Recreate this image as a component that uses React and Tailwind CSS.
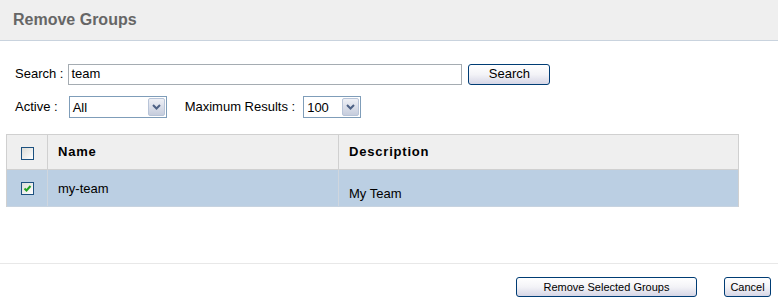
// Remove Groups dialog: search form, results table with checkboxes, footer actions.

function Chevron() {
  return (
    <svg width="9" height="6" viewBox="0 0 9 6">
      <path d="M1 1 L4.5 4.5 L8 1" fill="none" stroke="#4d6185" strokeWidth="2" />
    </svg>
  );
}

function Select({ value, width }) {
  return (
    <div
      className={`flex items-center h-[22px] border border-[#7f9db9] bg-white ${width}`}
    >
      <span className="flex-1 pl-[3px] leading-none">{value}</span>
      <span className="flex items-center justify-center w-[17px] h-[18px] mr-[1px] rounded-[2px] border border-[#b8c4d8] bg-gradient-to-b from-[#eef0f6] to-[#c6cddd]">
        <Chevron />
      </span>
    </div>
  );
}

function Checkbox({ checked }) {
  return (
    <span className="flex items-center justify-center w-[13px] h-[13px] border border-[#1c5180] bg-gradient-to-br from-[#dcdcd7] to-white">
      {checked && (
        <svg width="9" height="9" viewBox="0 0 9 9">
          <path d="M1.5 4.5 L3.5 6.5 L7.5 2" fill="none" stroke="#21a121" strokeWidth="2" />
        </svg>
      )}
    </span>
  );
}

function Button({ children, className }) {
  return (
    <button
      className={`flex items-center justify-center rounded-[3px] border border-[#003c74] bg-gradient-to-b from-white via-[#f3f3f7] to-[#d6d6e6] text-black ${className}`}
    >
      {children}
    </button>
  );
}

function App() {
  return (
    <div className="w-[778px] h-[305px] bg-white text-[13px] text-black font-['Liberation_Sans',Arial,sans-serif]">
      <header className="h-[41px] flex items-center pl-[13px] bg-[#efefef] border-b border-[#c9d3de]">
        <h1 className="text-[16px] font-bold text-[#666666]">Remove Groups</h1>
      </header>

      <div className="pt-[22px]">
        <div className="flex items-center h-[22px] pl-[15px]">
          <span>Search :</span>
          <div className="ml-[5px] w-[394px] h-[21px] flex items-center border border-[#a5acb2] pl-[2px]">
            team
          </div>
          <Button className="ml-[6px] w-[82px] h-[21px]">Search</Button>
        </div>

        <div className="flex items-center h-[22px] mt-[11px] pl-[15px]">
          <span>Active :</span>
          <div className="ml-[11px]">
            <Select value="All" width="w-[98px]" />
          </div>
          <span className="ml-[18px]">Maximum Results :</span>
          <div className="ml-[8px]">
            <Select value="100" width="w-[58px]" />
          </div>
        </div>

        <div className="mt-[16px] ml-[6px] w-[733px] border-x border-t border-[#d0d0d0]">
          <div className="flex h-[35px] bg-[#efefef] border-b border-[#d0d0d0] font-bold tracking-[0.8px]">
            <div className="w-[41px] flex items-center justify-center border-r border-[#d0d0d0] pt-[2px]">
              <Checkbox />
            </div>
            <div className="w-[291px] flex items-center pl-[10px] border-r border-[#d0d0d0]">
              Name
            </div>
            <div className="flex-1 flex items-center pl-[10px]">Description</div>
          </div>
          <div className="flex h-[37px] bg-[#bbcfe3] border-b border-[#c7d3e0]">
            <div className="w-[41px] flex items-center justify-center border-r border-[#cfd6de]">
              <Checkbox checked />
            </div>
            <div className="w-[291px] pl-[10px] pt-[9px] border-r border-[#cfd6de]">my-team</div>
            <div className="flex-1 pl-[10px] pt-[14px]">My Team</div>
          </div>
        </div>

        <div className="mt-[56px] border-t border-[#e8e8e8] pt-[13px] flex justify-end pr-[7px] gap-[27px] text-[11px]">
          <Button className="w-[181px] h-[20px]">Remove Selected Groups</Button>
          <Button className="w-[47px] h-[20px]">Cancel</Button>
        </div>
      </div>
    </div>
  );
}

export default App;
